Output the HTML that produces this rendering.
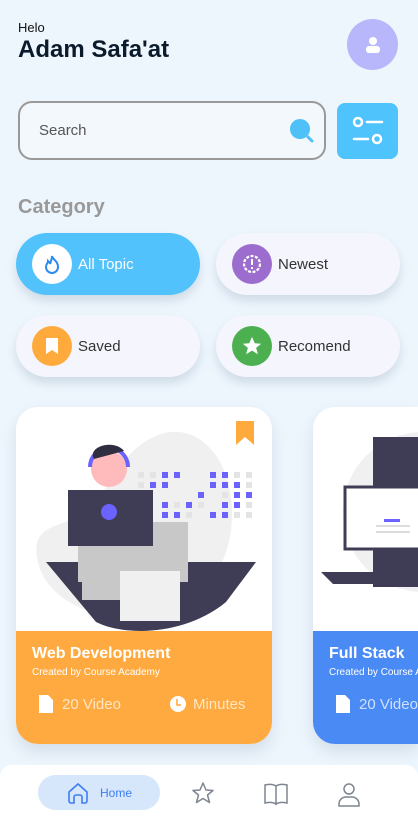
<!DOCTYPE html>
<html><head><meta charset="utf-8"><style>
*{margin:0;padding:0;box-sizing:border-box}
html,body{width:418px;height:820px;overflow:hidden}
body{background:#eef6fd;font-family:"Liberation Sans",sans-serif;position:relative}
.abs{position:absolute}
.pill{position:absolute;width:184px;height:62px;border-radius:31px;background:#f5f6fd;box-shadow:0 6px 10px rgba(150,170,190,.35);display:flex;align-items:center;padding-left:16px;font-size:15px;color:#333}
.ic{width:40px;height:40px;border-radius:50%;margin-right:6px;display:flex;align-items:center;justify-content:center}
.card{position:absolute;top:407px;height:337px;border-radius:22px;background:#fff;overflow:hidden;box-shadow:0 8px 16px rgba(150,170,190,.3)}
.bot{position:absolute;left:0;right:0;top:224px;bottom:0;color:#fff;padding:14px 0 0 16px}
.bot h3{font-size:16px;font-weight:bold;margin-bottom:4px}
.bot p{font-size:10px;margin-bottom:16px}
.meta{font-size:15px;color:#ffe6c2;display:flex;align-items:center}
</style></head><body>
<div class="abs" style="left:18px;top:20px;font-size:13px;color:#111">Helo</div>
<div class="abs" style="left:18px;top:36px;font-size:24px;font-weight:bold;color:#0c1b2c">Adam Safa'at</div>
<div class="abs" style="left:347px;top:19px;width:51px;height:51px;border-radius:50%;background:#b8b7fb;display:flex;align-items:center;justify-content:center">
<svg width="18" height="18" viewBox="0 0 18 18"><circle cx="9" cy="5" r="4" fill="#fff"/><rect x="2" y="10" width="14" height="7" rx="3" fill="#fff"/></svg></div>
<div class="abs" style="left:18px;top:101px;width:308px;height:59px;border:2px solid #999;border-radius:14px;background:#f3f8fd"></div>
<div class="abs" style="left:39px;top:122px;font-size:15px;color:#555">Search</div>
<svg class="abs" style="left:288px;top:117px" width="28" height="28" viewBox="0 0 28 28"><circle cx="12" cy="12" r="10" fill="#4fc0f8"/><line x1="20" y1="20" x2="24" y2="24" stroke="#4fc0f8" stroke-width="3" stroke-linecap="round"/></svg>
<div class="abs" style="left:337px;top:103px;width:61px;height:56px;border-radius:8px;background:#4fc3fc"></div>
<svg class="abs" style="left:350px;top:113px" width="36" height="36" viewBox="0 0 36 36"><circle cx="8" cy="9" r="4" fill="none" stroke="#fff" stroke-width="2.5"/><line x1="17" y1="9" x2="32" y2="9" stroke="#fff" stroke-width="2.5" stroke-linecap="round"/><line x1="4" y1="26" x2="18" y2="26" stroke="#fff" stroke-width="2.5" stroke-linecap="round"/><circle cx="27" cy="26" r="4" fill="none" stroke="#fff" stroke-width="2.5"/></svg>
<div class="abs" style="left:18px;top:196px;font-size:20px;font-weight:bold;color:#999">Category</div>
<div class="pill" style="left:16px;top:233px;background:#52c2fc;color:#fff"><div class="ic" style="background:#fff"><svg width="18" height="20" viewBox="0 0 18 20"><path d="M9 2C10 6 15 7 15 13a6 6 0 0 1-12 0c0-3 2-4 2-6 1 1 2 2 2 3 1-3 2-5 2-8z" fill="none" stroke="#2a8cf0" stroke-width="2"/></svg></div>All Topic</div>
<div class="pill" style="left:216px;top:233px"><div class="ic" style="background:#9c6ccf"><svg width="24" height="24" viewBox="0 0 24 24"><circle cx="12" cy="12" r="8" fill="none" stroke="#fff" stroke-width="2.2" stroke-dasharray="3 1.5"/><rect x="11" y="7" width="2" height="6" fill="#fff"/><rect x="11" y="15" width="2" height="2" fill="#fff"/></svg></div>Newest</div>
<div class="pill" style="left:16px;top:315px"><div class="ic" style="background:#ffaa3c"><svg width="14" height="18" viewBox="0 0 14 18"><path d="M1 1h12v16l-6-4-6 4z" fill="#fff"/></svg></div>Saved</div>
<div class="pill" style="left:216px;top:315px"><div class="ic" style="background:#4caf50"><svg width="22" height="22" viewBox="0 0 24 24"><path d="M12 2l3 7 7 .5-5.5 4.5 2 7-6.5-4-6.5 4 2-7L2 9.5 9 9z" fill="#fff"/></svg></div>Recomend</div>

<div class="card" style="left:16px;width:256px">
<svg class="abs" style="left:0;top:0" width="256" height="224" viewBox="0 0 256 224">
<path d="M138 30c40-20 80 20 78 80-2 60-40 95-90 100-50 5-100-20-105-60-5-30 20-30 40-40 30-15 40-65 77-80z" fill="#f0f0f0"/>
<path d="M30 155 L240 155 L210 195 C170 228 110 230 80 215 Z" fill="#3f3d56"/>
<rect x="62" y="115" width="110" height="60" fill="#c8c8c8"/>
<rect x="66" y="173" width="80" height="20" fill="#c8c8c8"/>
<circle cx="93" cy="62" r="18" fill="#fbb"/>
<path d="M74 60a19 19 0 0 1 38 0" fill="none" stroke="#6c63ff" stroke-width="4"/>
<path d="M78 52a16 10 0 0 1 30 -8" fill="#2f2e41" />
<rect x="52" y="83" width="85" height="56" fill="#3f3d56"/>
<circle cx="93" cy="105" r="8" fill="#6c63ff"/>
<rect x="104" y="164" width="60" height="50" fill="#f0f0f0"/>
<g fill="#6c63ff"><rect x="146" y="65" width="6" height="6"/><rect x="158" y="65" width="6" height="6"/><rect x="194" y="65" width="6" height="6"/><rect x="206" y="65" width="6" height="6"/><rect x="134" y="75" width="6" height="6"/><rect x="146" y="75" width="6" height="6"/><rect x="194" y="75" width="6" height="6"/><rect x="206" y="75" width="6" height="6"/><rect x="218" y="75" width="6" height="6"/><rect x="182" y="85" width="6" height="6"/><rect x="218" y="85" width="6" height="6"/><rect x="230" y="85" width="6" height="6"/><rect x="146" y="95" width="6" height="6"/><rect x="170" y="95" width="6" height="6"/><rect x="206" y="95" width="6" height="6"/><rect x="218" y="95" width="6" height="6"/><rect x="146" y="105" width="6" height="6"/><rect x="158" y="105" width="6" height="6"/><rect x="194" y="105" width="6" height="6"/><rect x="206" y="105" width="6" height="6"/></g>
<g fill="#e4e4e4"><rect x="122" y="65" width="6" height="6"/><rect x="134" y="65" width="6" height="6"/><rect x="218" y="65" width="6" height="6"/><rect x="230" y="65" width="6" height="6"/><rect x="122" y="75" width="6" height="6"/><rect x="230" y="75" width="6" height="6"/><rect x="206" y="85" width="6" height="6"/><rect x="158" y="95" width="6" height="6"/><rect x="182" y="95" width="6" height="6"/><rect x="230" y="95" width="6" height="6"/><rect x="170" y="105" width="6" height="6"/><rect x="218" y="105" width="6" height="6"/><rect x="230" y="105" width="6" height="6"/></g>
<path d="M220 14h18v24l-9-8-9 8z" fill="#ffaa3c"/>
</svg>
<div class="bot" style="background:#ffaa40">
<h3>Web Development</h3><p>Created by Course Academy</p>
<div class="meta"><svg width="16" height="20" viewBox="0 0 16 20" style="margin:0 8px 0 6px"><path d="M1 1h9l5 5v13H1z" fill="#fff"/></svg>20 Video<span style="width:48px"></span><svg width="18" height="18" viewBox="0 0 18 18" style="margin-right:6px"><circle cx="9" cy="9" r="8" fill="#fff"/><path d="M8 4v6h4" stroke="#ffaa40" stroke-width="1.6" fill="none"/></svg>Minutes</div>
</div></div>

<div class="card" style="left:313px;width:105px;border-radius:22px 0 0 22px">
<svg class="abs" style="left:0;top:0" width="105" height="224" viewBox="0 0 105 224">
<circle cx="110" cy="105" r="80" fill="#f0f0f0"/>
<rect x="60" y="30" width="60" height="150" fill="#3f3d56"/>
<path d="M8 165h140v12H20z" fill="#3f3d56"/>
<rect x="32" y="80" width="110" height="62" fill="#fff" stroke="#3f3d56" stroke-width="3"/>
<rect x="71" y="112" width="16" height="3" fill="#6c63ff"/>
<rect x="63" y="118" width="34" height="2" fill="#ddd"/><rect x="63" y="124" width="34" height="2" fill="#ddd"/>
</svg>
<div class="bot" style="background:#4a8af4;white-space:nowrap">
<h3>Full Stack</h3><p>Created by Course Academy</p>
<div class="meta" style="color:#cfe0fd"><svg width="16" height="20" viewBox="0 0 16 20" style="margin:0 8px 0 6px"><path d="M1 1h9l5 5v13H1z" fill="#fff"/></svg>20 Video</div>
</div></div>

<div class="abs" style="left:0;top:765px;width:418px;height:55px;background:#fff;border-radius:12px 12px 0 0"></div>
<div class="abs" style="left:38px;top:775px;width:122px;height:35px;border-radius:18px;background:#d6e6fb"></div>
<svg class="abs" style="left:66px;top:781px" width="24" height="24" viewBox="0 0 24 24"><path d="M3 11L12 3l9 8v9a2 2 0 0 1-2 2h-3v-6a2 2 0 0 0-2-2h-4a2 2 0 0 0-2 2v6H5a2 2 0 0 1-2-2z" fill="none" stroke="#3f7ef0" stroke-width="1.6"/></svg>
<div class="abs" style="left:100px;top:786px;font-size:12px;color:#3f7ef0">Home</div>
<svg class="abs" style="left:191px;top:781px" width="24" height="24" viewBox="0 0 24 24"><path d="M12 2l3 7 7 .5-5.5 4.5 2 7.5-6.5-4-6.5 4 2-7.5L2 9.5 9 9z" fill="none" stroke="#7d8590" stroke-width="1.5" stroke-linejoin="round"/></svg>
<svg class="abs" style="left:263px;top:782px" width="26" height="24" viewBox="0 0 26 24"><path d="M2 3c4-1 8-1 11 1v18c-3-2-7-2-11-1zM24 3c-4-1-8-1-11 1v18c3-2 7-2 11-1z" fill="none" stroke="#7d8590" stroke-width="1.5"/></svg>
<svg class="abs" style="left:337px;top:781px" width="24" height="26" viewBox="0 0 24 26"><circle cx="12" cy="8" r="5" fill="none" stroke="#7d8590" stroke-width="1.5"/><path d="M2 25v-2a7 7 0 0 1 7-7h6a7 7 0 0 1 7 7v2z" fill="none" stroke="#7d8590" stroke-width="1.5"/></svg>
</body></html>
